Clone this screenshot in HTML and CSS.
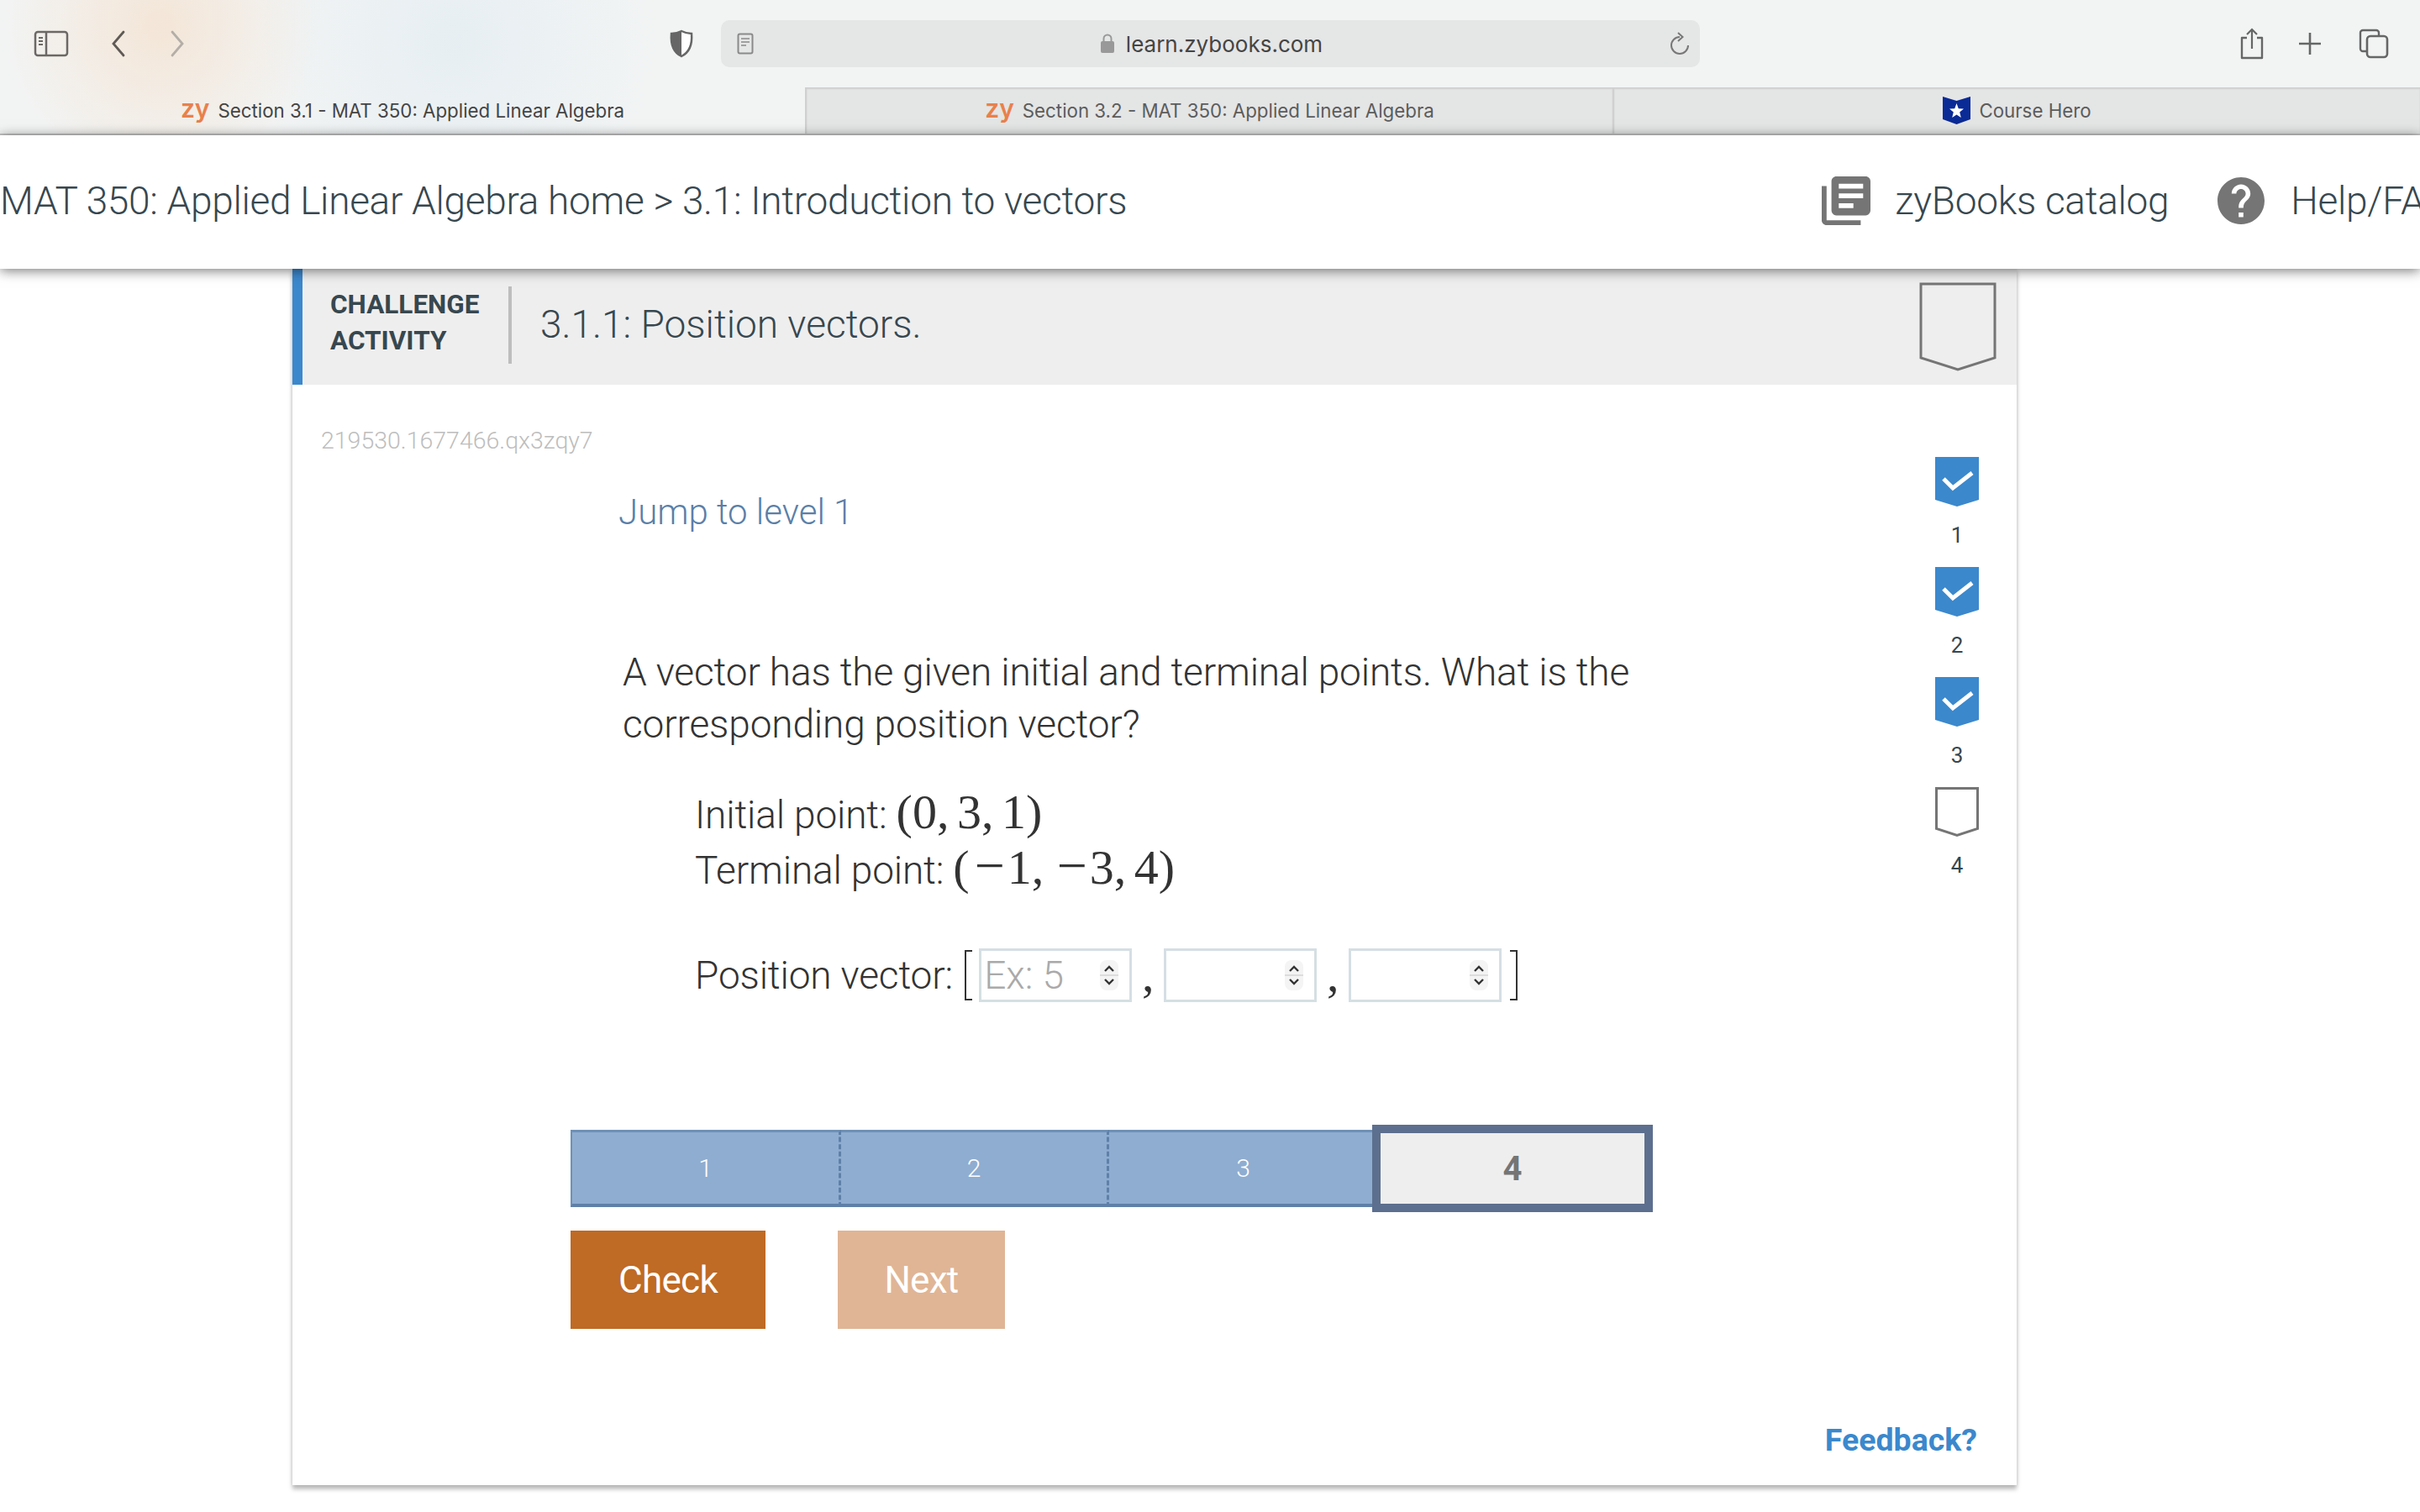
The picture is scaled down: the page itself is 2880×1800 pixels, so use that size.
FILE: index.html
```html
<!DOCTYPE html>
<html lang="en">
<head>
    <meta charset="UTF-8">
    <title>Section 3.1 - MAT 350: Applied Linear Algebra</title>
    <link rel="stylesheet" href="styles.css">
</head>
<body>
    <div class="browser">
        <div class="toolbar">
            <svg class="tool-sidebar" width="42" height="32" viewBox="0 0 42 32"><rect x="2" y="2" width="38" height="28" rx="3" fill="none" stroke="#6b6866" stroke-width="2.5"/><path d="M15 2v28" stroke="#6b6866" stroke-width="2.5"/><path d="M6 9h5M6 13h5M6 17h5" stroke="#6b6866" stroke-width="2"/></svg>
            <svg class="tool-back" width="20" height="32" viewBox="0 0 20 32"><path d="M16 2L4 16l12 14" fill="none" stroke="#5f5a56" stroke-width="2.8" stroke-linecap="round"/></svg>
            <svg class="tool-forward" width="20" height="32" viewBox="0 0 20 32"><path d="M4 2l12 14L4 30" fill="none" stroke="#b3aea8" stroke-width="2.8" stroke-linecap="round"/></svg>
            <svg class="tool-shield" width="30" height="34" viewBox="0 0 30 34"><path d="M15 2c4 2 8 3 12 3 1 12-2 22-12 27C5 27 2 17 3 5c4 0 8-1 12-3z" fill="#fff" stroke="#666" stroke-width="2.5"/><path d="M15 2c-4 2-8 3-12 3-1 12 2 22 12 27z" fill="#666"/></svg>
            <div class="address">
                <svg class="reader" width="20" height="26" viewBox="0 0 20 26"><rect x="1.500" y="1.500" width="17" height="23" rx="2" fill="none" stroke="#8a8a8a" stroke-width="2"/><path d="M5 7h10M5 11h10M5 15h6" stroke="#8a8a8a" stroke-width="1.600"/></svg>
                <div class="url">
                    <svg width="16" height="24" viewBox="0 0 16 24"><rect x="0" y="9" width="16" height="14" rx="2" fill="#999"/><path d="M3.500 10V6a4.500 4.500 0 0 1 9 0v4" fill="none" stroke="#999" stroke-width="2"/></svg>
                    <span>learn.zybooks.com</span>
                </div>
                <svg class="reload" width="24" height="28" viewBox="0 0 24 28"><path d="M22 16A10 10 0 1 1 12 6" fill="none" stroke="#777" stroke-width="2"/><path d="M10 1l5.500 5L10 11" fill="none" stroke="#777" stroke-width="2"/></svg>
            </div>
            <div class="tool-right">
                <svg width="30" height="38" viewBox="0 0 30 38"><path d="M9 12H3v24h24V12h-6" fill="none" stroke="#666" stroke-width="2.400" stroke-linejoin="round"/><path d="M15 25V2M9 8l6-6 6 6" fill="none" stroke="#666" stroke-width="2.200"/></svg>
                <svg width="28" height="28" viewBox="0 0 28 28"><path d="M14 1v26M1 14h26" stroke="#666" stroke-width="2.600"/></svg>
                <svg class="tool-tabs" width="36" height="36" viewBox="0 0 36 36"><path d="M9 27H5a3 3 0 0 1-3-3V5a3 3 0 0 1 3-3h16a3 3 0 0 1 3 3v3" fill="none" stroke="#666" stroke-width="2.400"/><rect x="10" y="9" width="24" height="25" rx="4" fill="none" stroke="#666" stroke-width="2.600"/></svg>
            </div>
        </div>
        <div class="tabs">
            <div class="tab active"><span class="zy">zy</span>Section 3.1 - MAT 350: Applied Linear Algebra</div>
            <div class="tab"><span class="zy">zy</span>Section 3.2 - MAT 350: Applied Linear Algebra</div>
            <div class="tab">
                <svg class="hero-icon" width="33" height="33" viewBox="0 0 33 33"><path d="M0 0l16.500 5L33 0v27l-16.500 6L0 27z" fill="#0a2a96"/><polygon points="16.500,8 18.800,14.200 25,14.500 20.200,18.500 21.800,25 16.500,21.400 11.200,25 12.800,18.500 8,14.500 14.200,14.200" fill="#fff"/></svg>
                Course Hero
            </div>
        </div>
    </div>

    <nav class="navbar">
        <div class="crumb">MAT 350: Applied Linear Algebra home &gt; 3.1: Introduction to vectors</div>
        <div class="nav-links">
            <svg class="nav-book" width="58" height="58" viewBox="2 2 20 20"><path fill="#757575" d="M4 6H2v14c0 1.100.9 2 2 2h14v-2H4V6zm16-4H8c-1.100 0-2 .9-2 2v12c0 1.100.9 2 2 2h12c1.100 0 2-.9 2-2V4c0-1.100-.9-2-2-2zm-1 9H9V9h10v2zm-4 4H9v-2h6v2zm4-8H9V5h10v2z"/></svg>
            <span>zyBooks catalog</span>
            <svg class="nav-help" width="56" height="56" viewBox="2 2 20 20"><path fill="#757575" d="M12 2C6.480 2 2 6.480 2 12s4.480 10 10 10 10-4.480 10-10S17.520 2 12 2zm1 17h-2v-2h2v2zm2.070-7.750l-.9.920C13.450 12.900 13 13.500 13 15h-2v-.5c0-1.100.450-2.100 1.170-2.830l1.240-1.260c.370-.360.590-.860.590-1.410 0-1.100-.9-2-2-2s-2 .9-2 2H8c0-2.210 1.790-4 4-4s4 1.790 4 4c0 .880-.360 1.680-.930 2.250z"/></svg>
            <span>Help/FAQ</span>
        </div>
    </nav>

    <div class="card">
        <div class="card-head">
            <div class="head-label">CHALLENGE<br>ACTIVITY</div>
            <div class="head-title">3.1.1: Position vectors.</div>
            <svg class="head-badge" width="92" height="106" viewBox="0 0 92 106"><path d="M2 2h88v88l-44 14-44-14z" fill="none" stroke="#757575" stroke-width="3"/></svg>
        </div>
        <div class="card-body">
            <div class="activity">
                <div class="activity-id">219530.1677466.qx3zqy7</div>
                <div class="question-wrap">
                    <div class="jump">Jump to level 1</div>
                    <p class="question">A vector has the given initial and terminal points. What is the corresponding position vector?</p>
                    <div class="points">
                        <div class="point">Initial point: <span class="math">(0, 3, 1)</span></div>
                        <div class="point">Terminal point: <span class="math">(<span class="minus">−</span>1, <span class="minus">−</span>3, 4)</span></div>
                    </div>
                    <div class="vector-row">
                        <span class="vector-label">Position vector:</span>
                        <span class="bracket left"></span>
                        <div class="num-box"><input type="text" placeholder="Ex: 5"><svg width="22" height="36" viewBox="0 0 22 36"><rect width="22" height="36" rx="8" fill="#f4f4f4"/><path d="M0 18h22" stroke="#ddd" stroke-width="2"/><path d="M6 13l5-5 5 5M6 23l5 5 5-5" fill="none" stroke="#333" stroke-width="2.400"/></svg></div>
                        <span class="comma">,</span>
                        <div class="num-box"><input type="text"><svg width="22" height="36" viewBox="0 0 22 36"><rect width="22" height="36" rx="8" fill="#f4f4f4"/><path d="M0 18h22" stroke="#ddd" stroke-width="2"/><path d="M6 13l5-5 5 5M6 23l5 5 5-5" fill="none" stroke="#333" stroke-width="2.400"/></svg></div>
                        <span class="comma">,</span>
                        <div class="num-box"><input type="text"><svg width="22" height="36" viewBox="0 0 22 36"><rect width="22" height="36" rx="8" fill="#f4f4f4"/><path d="M0 18h22" stroke="#ddd" stroke-width="2"/><path d="M6 13l5-5 5 5M6 23l5 5 5-5" fill="none" stroke="#333" stroke-width="2.400"/></svg></div>
                        <span class="bracket right"></span>
                    </div>
                </div>
                <div class="progress">
                    <div class="step">1</div>
                    <div class="step">2</div>
                    <div class="step">3</div>
                    <div class="step current">4</div>
                </div>
                <div class="buttons">
                    <button class="check">Check</button>
                    <button class="next">Next</button>
                </div>
            </div>
            <div class="levels">
                <div class="level">
                    <svg width="52" height="60" viewBox="0 0 52 60"><path d="M0 0h52v51l-26 8-26-8z" fill="#3b88cd"/><path d="M10 26l11 11 23-18" fill="none" stroke="#fff" stroke-width="5"/></svg>
                    <span>1</span>
                </div>
                <div class="level">
                    <svg width="52" height="60" viewBox="0 0 52 60"><path d="M0 0h52v51l-26 8-26-8z" fill="#3b88cd"/><path d="M10 26l11 11 23-18" fill="none" stroke="#fff" stroke-width="5"/></svg>
                    <span>2</span>
                </div>
                <div class="level">
                    <svg width="52" height="60" viewBox="0 0 52 60"><path d="M0 0h52v51l-26 8-26-8z" fill="#3b88cd"/><path d="M10 26l11 11 23-18" fill="none" stroke="#fff" stroke-width="5"/></svg>
                    <span>3</span>
                </div>
                <div class="level">
                    <svg width="52" height="60" viewBox="0 0 52 60"><path d="M1.500 1.500h49v48l-24.500 8-24.500-8z" fill="none" stroke="#757575" stroke-width="3"/></svg>
                    <span>4</span>
                </div>
            </div>
        </div>
        <div class="feedback">Feedback?</div>
    </div>
</body>
</html>
```

FILE: styles.css
```css
html, body {
    margin: 0;
    height: 1800px;
    overflow: hidden;
}
body {
    font-family: 'Roboto', sans-serif;
    font-weight: 300;
    color: #333;
    background: #fff;
}

/* browser chrome */
.browser {
    height: 161px;
    box-sizing: border-box;
    border-bottom: 2px solid #c9c9c9;
    background:
        radial-gradient(circle at 190px 30px, rgba(245, 222, 200, 0.65), rgba(245, 222, 200, 0) 190px),
        radial-gradient(circle at 540px 50px, rgba(226, 236, 242, 0.7), rgba(226, 236, 242, 0) 240px),
        #f2f4f4;
    font-family: 'Inter', 'Noto Sans', sans-serif;
    font-weight: 400;
}
.toolbar {
    height: 104px;
    display: flex;
    align-items: center;
    padding-left: 40px;
}
.tool-back { margin-left: 49px; }
.tool-forward { margin-left: 50px; }
.tool-shield { margin-left: 575px; }
.address {
    width: 1165px;
    height: 56px;
    margin-left: 32px;
    box-sizing: border-box;
    padding: 0 12px 0 19px;
    display: flex;
    align-items: center;
    justify-content: space-between;
    background: #e5e6e6;
    border-radius: 10px;
}
.url {
    display: flex;
    align-items: center;
    gap: 14px;
    font-size: 26px;
    color: #444;
}
.tool-right {
    display: flex;
    align-items: center;
    gap: 40px;
    margin-left: 642px;
}
.tool-tabs { margin-left: 4px; }
.tabs {
    display: flex;
    height: 55px;
}
.tab {
    width: 961px;
    box-sizing: border-box;
    display: flex;
    align-items: center;
    justify-content: center;
    font-size: 22.300px;
    color: #5c5c5c;
    background: #e4e5e5;
    border-left: 2px solid #d0d0d0;
    box-shadow: inset 0 2px 2px #cfcfcf;
}
.tab.active {
    width: 958px;
    background: transparent;
    color: #444;
    border-left: none;
    box-shadow: none;
}
.zy {
    font-size: 30px;
    font-weight: 600;
    color: #e8814c;
    margin-right: 10px;
    position: relative;
    top: -3px;
}
.hero-icon { margin-right: 10px; }

/* top nav of the page */
.navbar {
    position: relative;
    z-index: 2;
    height: 159px;
    padding-bottom: 4px;
    box-sizing: border-box;
    display: flex;
    align-items: center;
    background: #fff;
    box-shadow: 0 2px 14px rgba(0, 0, 0, 0.55);
    font-size: 46px;
    letter-spacing: -0.3px;
    color: #37474f;
    white-space: nowrap;
    overflow: hidden;
}
.crumb { flex-shrink: 0; }
.nav-links {
    display: flex;
    align-items: center;
    flex-shrink: 0;
    margin-left: 827px;
}
.nav-book { margin-right: 29px; }
.nav-help { margin: 0 31px 0 58px; }

/* activity card */
.card {
    position: relative;
    width: 2052px;
    height: 1448px;
    margin-left: 348px;
    background: #fff;
    box-shadow: 0 0 5px rgba(0, 0, 0, 0.12), 0 5px 5px rgba(0, 0, 0, 0.25);
}
.card-head {
    height: 138px;
    box-sizing: border-box;
    border-left: 12px solid #3b88cd;
    background: #eee;
    display: flex;
    align-items: center;
    color: #37474f;
}
.head-label {
    width: 212px;
    height: 92px;
    margin: -4px 0 0 33px;
    border-right: 4px solid #bdbdbd;
    font-size: 31.500px;
    font-weight: 700;
    line-height: 43px;
}
.head-title {
    margin: -7px 0 0 34px;
    font-size: 46px;
}
.head-badge {
    margin-left: auto;
    margin-right: 24px;
}
.card-body {
    display: flex;
    justify-content: space-between;
}
.activity {
    padding-left: 34px;
}
.activity-id {
    margin-top: 49px;
    font-size: 28.500px;
    line-height: 36px;
    color: #bdbdbd;
}
.question-wrap {
    padding-left: 354px;
}
.jump {
    margin-top: 41px;
    font-size: 42px;
    line-height: 52px;
    color: #5a7fa8;
}
.question {
    width: 1240px;
    margin: 133px 0 0 5px;
    font-size: 46px;
    letter-spacing: -0.15px;
    line-height: 62px;
}
.points {
    margin: 45px 0 0 91px;
    font-size: 46px;
    letter-spacing: -0.15px;
    line-height: 63px;
}
.point { height: 61px; }
.math {
    font-family: 'Liberation Serif', serif;
    font-weight: 400;
    font-size: 58px;
    line-height: 1;
    word-spacing: -5px;
    letter-spacing: 0;
}
.minus {
    margin: 0 3px 0 6px;
    font-size: 64px;
    line-height: 1;
}
.vector-row {
    display: flex;
    align-items: center;
    margin: 67px 0 0 91px;
    font-size: 46px;
    letter-spacing: -0.15px;
}
.vector-label { margin-right: 14px; }
.bracket {
    width: 7px;
    height: 56px;
    border: 2px solid #333;
}
.bracket.left { border-right: none; margin-right: 8px; }
.bracket.right { border-left: none; margin-left: 10px; }
.comma {
    width: 38px;
    text-align: center;
    font-family: 'Liberation Serif', serif;
    font-size: 58px;
    font-weight: 400;
}
.num-box {
    width: 182px;
    height: 64px;
    box-sizing: border-box;
    display: flex;
    align-items: center;
    padding-right: 13px;
    border: 3px solid #d5dfe4;
}
.num-box input {
    flex: 1;
    min-width: 0;
    border: none;
    outline: none;
    padding: 0 0 0 3px;
    background: transparent;
    font-family: 'Roboto', sans-serif;
    font-weight: 300;
    font-size: 46px;
}
.num-box input::placeholder {
    color: #aaa;
}
.progress {
    display: flex;
    align-items: center;
    margin: 145px 0 0 297px;
    height: 104px;
}
.step {
    width: 319px;
    height: 92px;
    box-sizing: border-box;
    display: flex;
    align-items: center;
    justify-content: center;
    background: #8fadd0;
    border-top: 3px solid #6f90b6;
    border-bottom: 4px solid #5f80a8;
    border-right: 3px dashed #5f80a8;
    color: #fff;
    font-size: 30px;
}
.step:first-child {
    width: 322px;
    border-left: 2px solid #6f90b6;
}
.step:nth-child(3) {
    width: 313px;
    padding-left: 6px;
    border-right: none;
}
.step.current {
    width: 334px;
    height: 104px;
    padding-left: 0;
    background: #eee;
    border: 10px solid #5d6f8e;
    color: #757575;
    font-size: 40px;
    font-weight: 700;
}
.buttons {
    display: flex;
    gap: 86px;
    margin: 22px 0 0 297px;
}
.buttons button {
    height: 117px;
    border: none;
    padding: 0;
    color: #fff;
    font-family: 'Roboto', sans-serif;
    font-weight: 400;
    font-size: 44px;
    letter-spacing: -0.7px;
}
.check {
    width: 232px;
    background: #bf6a25;
}
.next {
    width: 199px;
    background: #e0b595;
}
.levels {
    width: 52px;
    margin: 86px 45px 0 0;
}
.level {
    height: 131px;
    text-align: center;
    font-size: 26px;
    font-weight: 400;
    color: #37474f;
}
.level svg { display: block; }
.level span {
    display: block;
    margin-top: 18px;
}
.feedback {
    position: absolute;
    right: 47px;
    bottom: 32px;
    font-size: 37.500px;
    font-weight: 700;
    color: #3b88cd;
}
```
